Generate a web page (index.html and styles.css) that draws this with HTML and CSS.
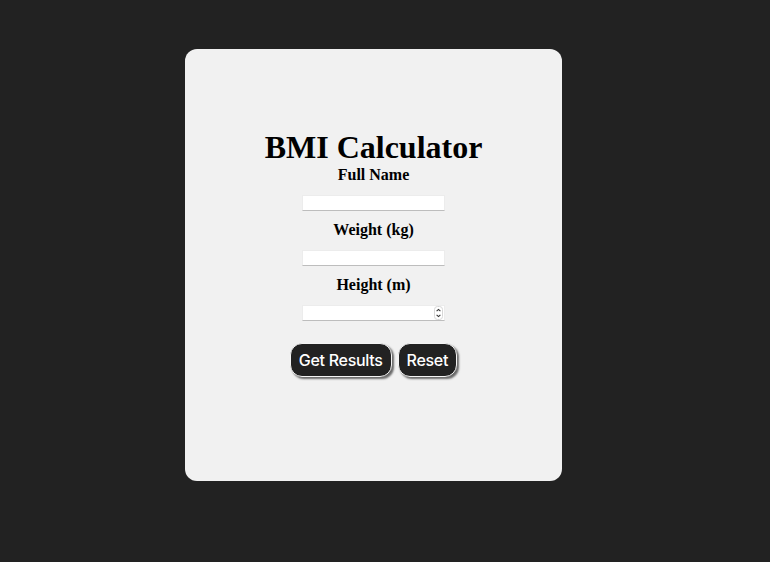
FILE: index.html
```html
<!DOCTYPE html>
<html>
<head>
<meta charset="utf-8">
<title>BMI Calculator</title>
<link rel="stylesheet" href="styles.css">
</head>
<body>
<div class="card">
  <h1 class="title">BMI Calculator</h1>
  <form class="form">
    <label class="label" for="name">Full Name</label>
    <input class="field" id="name" type="text">
    <label class="label" for="weight">Weight (kg)</label>
    <input class="field" id="weight" type="text">
    <label class="label" for="height">Height (m)</label>
    <div class="num-wrap">
      <input class="field" id="height" type="text">
      <span class="spinner">
        <svg width="9" height="14" viewBox="0 0 9 14">
          <rect x="0.5" y="0.5" width="8" height="13" rx="3" fill="#fff" stroke="#d6d6d6"/>
          <path d="M2.6 5.2 L4.5 3.4 L6.4 5.2" fill="none" stroke="#333" stroke-width="1.1"/>
          <path d="M2.6 8.8 L4.5 10.6 L6.4 8.8" fill="none" stroke="#333" stroke-width="1.1"/>
        </svg>
      </span>
    </div>
    <div class="actions">
      <button type="button" class="btn">Get Results</button>
      <button type="reset" class="btn">Reset</button>
    </div>
  </form>
</div>
</body>
</html>
```
FILE: styles.css
```css
html, body {
  margin: 0;
  padding: 0;
  background: #222222;
}
body {
  padding: 49px 0 0 185px;
  font-family: "Liberation Serif", "Times New Roman", serif;
}
.card {
  box-sizing: border-box;
  width: 377px;
  height: 432px;
  background: #f1f1f1;
  border-radius: 12px;
  padding-top: 80px;
  display: flex;
  flex-direction: column;
  align-items: center;
}
.title {
  margin: 0;
  font-size: 32px;
  line-height: 37px;
  font-weight: bold;
  color: #000;
  text-align: center;
}
.form {
  display: flex;
  flex-direction: column;
  align-items: center;
}
.label {
  display: block;
  font-size: 16px;
  line-height: 18px;
  font-weight: bold;
  color: #000;
  text-align: center;
}
.field {
  box-sizing: border-box;
  display: block;
  width: 143px;
  height: 16px;
  margin: 10.5px 0;
  padding: 0 2px;
  background: #fff;
  border: 1px solid #ececec;
  border-bottom: 1px solid #bdbdbd;
  border-radius: 0;
  outline: none;
}
.num-wrap {
  position: relative;
  width: 143px;
  height: 16px;
  margin: 10.5px 0;
}
.num-wrap .field {
  margin: 0;
}
.spinner {
  position: absolute;
  right: 2px;
  top: 1px;
  width: 9px;
  height: 14px;
  display: flex;
}
.actions {
  display: flex;
  gap: 6px;
  margin-top: 12px;
}
.btn {
  box-sizing: border-box;
  height: 34px;
  padding: 0 8px;
  background: #222222;
  color: #fff;
  font-family: Inter, "Liberation Sans", Arial, sans-serif;
  font-weight: 500;
  font-size: 16px;
  letter-spacing: -0.3px;
  line-height: 18px;
  border: 1px solid #f4f4f4;
  border-radius: 12px;
  box-shadow: 2px 2px 2px #6a6a6a;
  cursor: pointer;
}
```
